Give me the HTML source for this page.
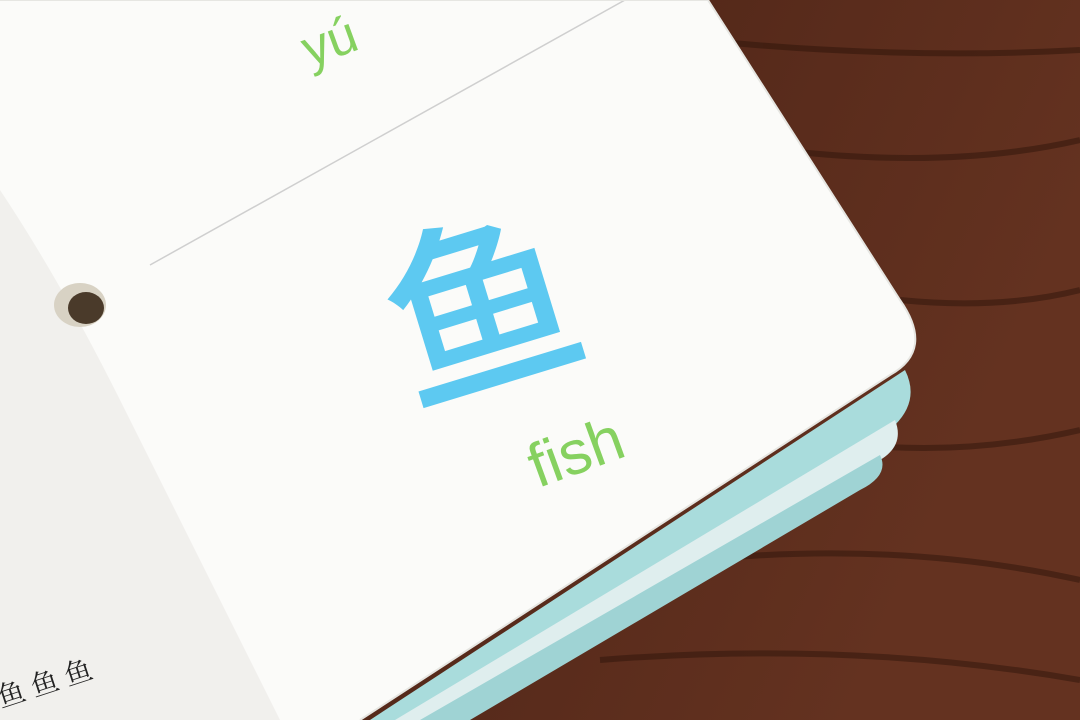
<!DOCTYPE html>
<html><head><meta charset="utf-8"><style>
html,body{margin:0;padding:0;width:1080px;height:720px;overflow:hidden;background:#4a2414}
.t{position:absolute;white-space:nowrap;transform-origin:center}
</style></head><body>
<svg width="1080" height="720" style="position:absolute;left:0;top:0">
<defs>
<linearGradient id="w" x1="0" y1="0" x2="1" y2="0.3">
<stop offset="0" stop-color="#3a1a0e"/><stop offset="0.3" stop-color="#70391f"/><stop offset="0.6" stop-color="#55291a"/><stop offset="1" stop-color="#643220"/></linearGradient>
</defs>
<rect width="1080" height="720" fill="url(#w)"/>
<g stroke="#2e1409" stroke-width="6" opacity="0.5" fill="none">
<path d="M700 40 Q900 60 1080 50"/><path d="M780 150 Q950 170 1080 140"/><path d="M900 300 Q1000 310 1080 290"/><path d="M700 560 Q900 540 1080 580"/><path d="M600 660 Q850 640 1080 680"/><path d="M820 440 Q950 460 1080 430"/>
</g>
<path d="M905 370 Q920 400 895 425 L420 720 L370 720 Z" fill="#a9dcdc"/>
<path d="M895 420 Q905 445 880 460 L440 720 L395 720 Z" fill="#dfeeee"/>
<path d="M880 455 Q890 475 860 490 L470 720 L420 720 Z" fill="#9fd3d4"/>
<path d="M0 0 L708 0 L900 300 Q935 350 890 375 L360 720 L0 720 Z" fill="#fbfbf9"/>
<path d="M0 190 Q60 280 120 400 Q200 560 280 720 L0 720 Z" fill="#f1f0ed"/>
<line x1="150" y1="265" x2="625" y2="0" stroke="#cfcfcf" stroke-width="1.5"/>
<ellipse cx="80" cy="305" rx="26" ry="22" fill="#d8d2c4"/>
<ellipse cx="86" cy="308" rx="18" ry="16" fill="#4a3a2a"/>
<path d="M0 0 L708 0 L900 300 Q935 350 890 375 L360 720" fill="none" stroke="#e6e6e2" stroke-width="2"/>
</svg>
<div class="t" style="left:382px;top:200px;font:500 192px 'Noto Sans CJK SC',sans-serif;color:#5dc9f1;transform:rotate(-17deg);line-height:1">鱼</div>
<div class="t" style="left:528px;top:422px;font:62px 'Liberation Sans',sans-serif;color:#86d160;transform:rotate(-20deg);line-height:1">fish</div>
<div class="t" style="left:302px;top:16px;font:52px 'Liberation Sans',sans-serif;color:#86d160;transform:rotate(-20deg);line-height:1">yú</div>
<div class="t" style="left:-5px;top:668px;font:28px 'Noto Serif CJK SC',serif;color:#222;transform:rotate(-18deg);line-height:1">鱼 鱼 鱼</div>
</body></html>
